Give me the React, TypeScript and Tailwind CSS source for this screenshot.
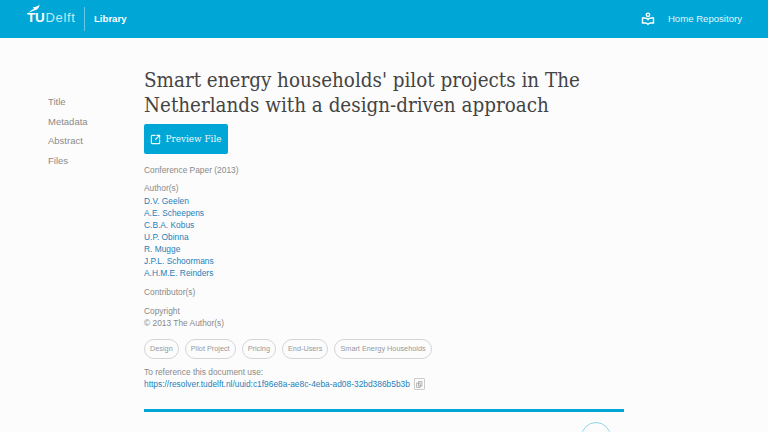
import { SquareArrowOutUpRight } from "lucide-react";

const authors = [
  "D.V. Geelen",
  "A.E. Scheepens",
  "C.B.A. Kobus",
  "U.P. Obinna",
  "R. Mugge",
  "J.P.L. Schoormans",
  "A.H.M.E. Reinders",
];

const tags = ["Design", "Pilot Project", "Pricing", "End-Users", "Smart Energy Households"];

const sideLinks = ["Title", "Metadata", "Abstract", "Files"];

function TuLogo() {
  return (
    <div className="relative flex h-[38px] w-[74px] items-end pb-[14px] text-white">
      <svg viewBox="0 0 16 12" className="absolute left-[28px] top-[4px] h-[10px] w-[12px]" fill="white">
        <path d="M0.5 11 C3 9 5 7 8 6 L6.5 3.5 C10 3.5 13 2.5 15.5 0 C15 3.5 13 7 9.5 7.5 C6 8 3.5 10 0.5 11 Z" />
      </svg>
      <span className="ml-[27px] text-[13.5px] leading-[13px] font-bold tracking-[-0.2px]">TU</span>
      <span className="ml-px text-[13px] leading-[13px] tracking-[0.6px] text-[#c4e9f5]">Delft</span>
    </div>
  );
}

function RepoIcon() {
  return (
    <svg viewBox="0 0 14 14" className="h-[14px] w-[14px]" fill="none" stroke="white" strokeWidth="1.4">
      <circle cx="7" cy="2.8" r="1.7" />
      <path d="M1.5 6 L4 6 C5.2 6 6.4 6.6 7 7.6 C7.6 6.6 8.8 6 10 6 L12.5 6 V11 H9.5 C8.4 11 7.6 11.6 7 12.4 C6.4 11.6 5.6 11 4.5 11 H1.5 Z" />
    </svg>
  );
}

export default function App() {
  return (
    <div className="h-[432px] w-[768px] overflow-hidden bg-[#fcfcfc] font-['Liberation_Sans',Arial,sans-serif]">
      <header className="flex h-[38px] items-center justify-between bg-[#00a6d6] text-white">
        <div className="flex items-center">
          <TuLogo />
          <div className="ml-[10px] h-[24px] w-px bg-[#66c9e6]" />
          <span className="ml-[9px] text-[9.6px] font-bold">Library</span>
        </div>
        <div className="mr-[26px] flex items-center gap-[13px]">
          <RepoIcon />
          <span className="text-[9.6px] text-[#e3f5fb]">Home Repository</span>
        </div>
      </header>

      <div className="flex">
        <nav className="w-[144px] pl-[48px] pt-[57px]">
          <ul className="flex flex-col gap-[5px] text-[9.5px] leading-[14.5px] text-[#8a8a8a]">
            {sideLinks.map((l) => (
              <li key={l}>{l}</li>
            ))}
          </ul>
        </nav>

        <main className="w-[480px] pt-[30px]">
          <h1 className="font-['DejaVu_Serif_Condensed','DejaVu_Serif',serif] text-[20.4px] leading-[25px] font-normal whitespace-nowrap text-[#444]">
            Smart energy households' pilot projects in The
            <br />
            Netherlands with a design-driven approach
          </h1>

          <button className="mt-[6px] flex h-[30px] w-[84px] items-center justify-center gap-[4px] rounded-[2px] bg-[#00a6d6] font-['DejaVu_Serif_Condensed','DejaVu_Serif',serif] text-[9.9px] text-[#eef9fc]">
            <SquareArrowOutUpRight size={11} strokeWidth={2.6} />
            Preview File
          </button>

          <p className="mt-[10px] text-[8.4px] leading-[12px] text-[#8a8a8a]">Conference Paper (2013)</p>

          <div className="mt-[6px] text-[8.4px] leading-[12px]">
            <p className="text-[#8a8a8a]">Author(s)</p>
            <ul className="mt-px text-[#1f7fb8]">
              {authors.map((a) => (
                <li key={a}>{a}</li>
              ))}
            </ul>
          </div>

          <p className="mt-[7px] text-[8.4px] leading-[12px] text-[#8a8a8a]">Contributor(s)</p>

          <div className="mt-[7px] text-[8.4px] leading-[12px] text-[#8a8a8a]">
            <p>Copyright</p>
            <p>© 2013 The Author(s)</p>
          </div>

          <div className="mt-[10px] flex gap-[6px]">
            {tags.map((t) => (
              <span
                key={t}
                className="flex h-[20px] items-center rounded-full border border-[#d5d5d5] px-[5px] text-[7.3px] text-[#999]"
              >
                {t}
              </span>
            ))}
          </div>

          <p className="mt-[7px] text-[8.4px] leading-[12px] text-[#8a8a8a]">To reference this document use:</p>
          <div className="flex items-center gap-[4px] text-[8.4px] leading-[12px] text-[#1f7fb8]">
            <span>https://resolver.tudelft.nl/uuid:c1f96e8a-ae8c-4eba-ad08-32bd386b5b3b</span>
            <span className="flex h-[12px] w-[11px] items-center justify-center rounded-[1px] border border-[#ccc]">
              <svg viewBox="0 0 10 10" className="h-[7px] w-[7px]" fill="none" stroke="#999" strokeWidth="1">
                <rect x="3.5" y="1" width="5" height="6" />
                <rect x="1" y="3" width="5" height="6" />
              </svg>
            </span>
          </div>

          <div className="mt-[19px] h-[3px] bg-[#00a6d6]" />

          <div className="flex justify-end">
            <div className="mt-[10px] mr-[13px] h-[30px] w-[30px] rounded-full border border-[#8fd6ec]" />
          </div>
        </main>
      </div>
    </div>
  );
}
